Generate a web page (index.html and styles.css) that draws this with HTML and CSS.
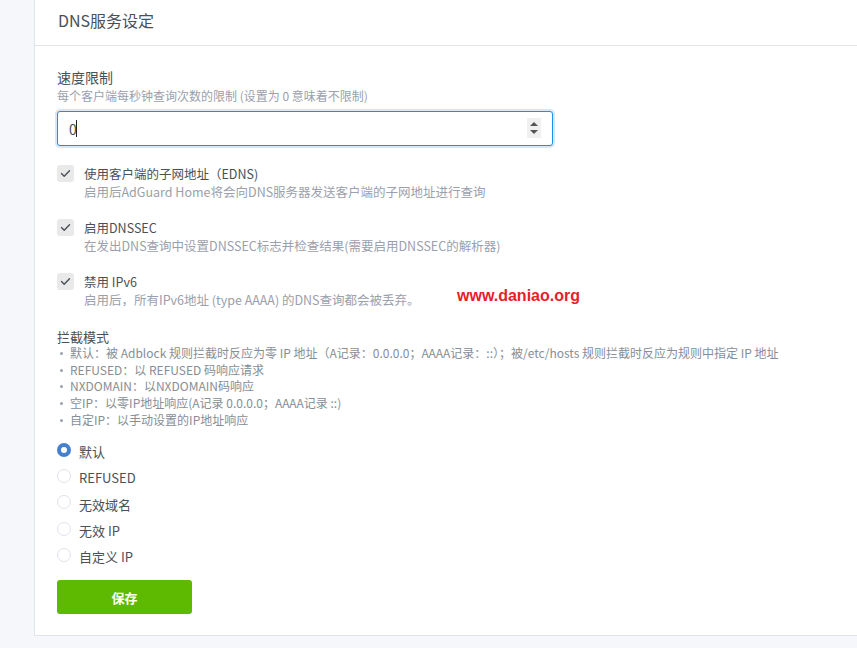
FILE: index.html
```html
<!DOCTYPE html>
<html lang="zh-CN">
<head>
  <meta charset="UTF-8">
  <title>DNS服务设定</title>
  <link rel="stylesheet" href="styles.css">
</head>
<body>
  <div class="page">
    <div class="card">
      <div class="card-header">
        <h3 class="card-title">DNS服务设定</h3>
      </div>

      <div class="card-body">
        <div class="form-group">
          <label class="form-label">速度限制</label>
          <div class="form-desc">每个客户端每秒钟查询次数的限制 (设置为 0 意味着不限制)</div>
          <div class="input-wrap">
            <input class="form-control" type="text" value="0">
            <span class="caret"></span>
            <span class="spinner">
              <span class="arrow-up"></span>
              <span class="arrow-down"></span>
            </span>
          </div>
        </div>

        <div class="check-row">
          <span class="checkbox">
            <svg width="11" height="9" viewBox="0 0 11 9" fill="none" stroke="#495057" stroke-width="1.4" stroke-linecap="round" stroke-linejoin="round">
              <polyline points="1.5 4.5 4.2 7.2 9.5 1.8"></polyline>
            </svg>
          </span>
          <div>
            <div class="check-label">使用客户端的子网地址（EDNS)</div>
            <div class="check-desc">启用后AdGuard Home将会向DNS服务器发送客户端的子网地址进行查询</div>
          </div>
        </div>

        <div class="check-row">
          <span class="checkbox">
            <svg width="11" height="9" viewBox="0 0 11 9" fill="none" stroke="#495057" stroke-width="1.4" stroke-linecap="round" stroke-linejoin="round">
              <polyline points="1.5 4.5 4.2 7.2 9.5 1.8"></polyline>
            </svg>
          </span>
          <div>
            <div class="check-label">启用DNSSEC</div>
            <div class="check-desc">在发出DNS查询中设置DNSSEC标志并检查结果(需要启用DNSSEC的解析器)</div>
          </div>
        </div>

        <div class="check-row">
          <span class="checkbox">
            <svg width="11" height="9" viewBox="0 0 11 9" fill="none" stroke="#495057" stroke-width="1.4" stroke-linecap="round" stroke-linejoin="round">
              <polyline points="1.5 4.5 4.2 7.2 9.5 1.8"></polyline>
            </svg>
          </span>
          <div>
            <div class="check-label">禁用 IPv6</div>
            <div class="check-desc">启用后，所有IPv6地址 (type AAAA) 的DNS查询都会被丢弃。</div>
          </div>
          <span class="watermark">www.daniao.org</span>
        </div>

        <div class="mode">
          <div class="mode-title">拦截模式</div>
          <ul class="mode-list">
            <li>默认：被 Adblock 规则拦截时反应为零 IP 地址（A记录：0.0.0.0；AAAA记录：::）；被/etc/hosts 规则拦截时反应为规则中指定 IP 地址</li>
            <li>REFUSED：以 REFUSED 码响应请求</li>
            <li>NXDOMAIN：以NXDOMAIN码响应</li>
            <li>空IP：以零IP地址响应(A记录 0.0.0.0；AAAA记录 ::)</li>
            <li>自定IP：以手动设置的IP地址响应</li>
          </ul>
        </div>

        <div class="radios">
          <label class="radio-row"><span class="radio checked"></span>默认</label>
          <label class="radio-row"><span class="radio"></span>REFUSED</label>
          <label class="radio-row"><span class="radio"></span>无效域名</label>
          <label class="radio-row"><span class="radio"></span>无效 IP</label>
          <label class="radio-row"><span class="radio"></span>自定义 IP</label>
        </div>

        <button class="btn-success">保存</button>
      </div>
    </div>
  </div>
</body>
</html>
```

FILE: styles.css
```css
* {
  margin: 0;
  padding: 0;
  box-sizing: border-box;
}

body {
  background-color: #f5f7fb;
  font-family: "Noto Sans CJK SC", "Noto Sans", sans-serif;
  color: #495057;
  overflow: hidden;
}

.page {
  padding-left: 34px;
  padding-bottom: 13px;
}

.card {
  background-color: #fff;
  border: 1px solid #e0e5ec;
  border-top: 0;
  border-right: 0;
}

.card-header {
  height: 46px;
  display: flex;
  align-items: center;
  padding: 0 23px 5px;
  border-bottom: 1px solid #e0e5ec;
}

.card-title {
  font-size: 16px;
  font-weight: 400;
  color: #495057;
}

.card-body {
  padding: 21px 22px 21px;
}

.form-label {
  display: block;
  font-size: 14px;
  line-height: 20px;
}

.form-desc {
  font-size: 12px;
  line-height: 18px;
  color: #9aa0ac;
  margin-bottom: 6px;
}

.input-wrap {
  position: relative;
  width: 496px;
}

.form-control {
  width: 100%;
  height: 35px;
  padding: 0 11px;
  font-family: inherit;
  font-size: 14px;
  color: #495057;
  border: 1px solid #1991eb;
  border-radius: 3px;
  box-shadow: 0 0 0 2px rgba(70, 127, 207, 0.2);
  outline: none;
}

.caret {
  position: absolute;
  left: 19px;
  top: 9px;
  width: 1px;
  height: 17px;
  background-color: #222;
}

.spinner {
  position: absolute;
  right: 12px;
  top: 7px;
  width: 14px;
  height: 20px;
  background-color: #f0f0f0;
  display: flex;
  flex-direction: column;
  align-items: center;
  justify-content: center;
  gap: 4px;
}

.arrow-up {
  border-left: 4px solid transparent;
  border-right: 4px solid transparent;
  border-bottom: 4px solid #555;
}

.arrow-down {
  border-left: 4px solid transparent;
  border-right: 4px solid transparent;
  border-top: 4px solid #555;
}

.form-group {
  margin-bottom: 19px;
}

.check-row {
  display: flex;
  align-items: flex-start;
  gap: 10px;
  margin-bottom: 18px;
  position: relative;
}

.checkbox {
  width: 17px;
  height: 17px;
  border-radius: 3px;
  background-color: #e9e9e9;
  display: flex;
  align-items: center;
  justify-content: center;
  flex-shrink: 0;
}

.check-label {
  font-size: 12.5px;
  line-height: 17px;
}

.check-desc {
  font-size: 12.5px;
  line-height: 19px;
  color: #9aa0ac;
}

.watermark {
  position: absolute;
  left: 400px;
  top: 14px;
  font-family: "Liberation Sans", Arial, sans-serif;
  font-weight: 700;
  font-size: 16px;
  color: #e8202a;
}

.mode {
  margin-top: 19px;
}

.mode-title {
  font-size: 13px;
  line-height: 17px;
}

.mode-list {
  list-style: none;
  font-size: 12px;
  line-height: 16.7px;
  color: #868e96;
}

.mode-list li {
  position: relative;
  padding-left: 13px;
}

.mode-list li::before {
  content: "";
  position: absolute;
  left: 3px;
  top: 7px;
  width: 3px;
  height: 3px;
  border-radius: 50%;
  background-color: #9aa0ac;
}

.radios {
  margin-top: 10px;
  display: flex;
  flex-direction: column;
}

.radio-row {
  display: flex;
  align-items: center;
  gap: 8px;
  height: 26.3px;
  font-size: 13px;
}

.radio {
  width: 14px;
  height: 14px;
  border-radius: 50%;
  border: 1px solid #dfe3ea;
  background-color: #fff;
  margin-top: -4px;
}

.radio.checked {
  border: 4px solid #467fcf;
}

.btn-success {
  margin-top: 10px;
  width: 135px;
  height: 34px;
  border: none;
  border-radius: 3px;
  background-color: #5eba00;
  color: #fff;
  font-family: inherit;
  font-size: 13px;
  font-weight: 700;
}
```
